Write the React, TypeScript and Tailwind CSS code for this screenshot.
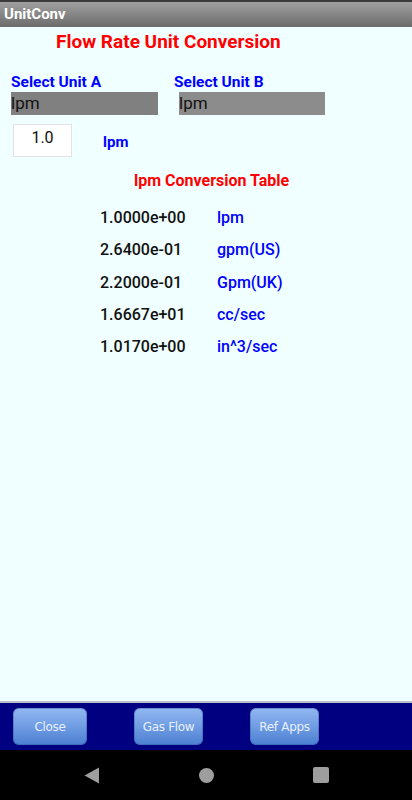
import React from "react";

const rows: [string, string][] = [
  ["1.0000e+00", "lpm"],
  ["2.6400e-01", "gpm(US)"],
  ["2.2000e-01", "Gpm(UK)"],
  ["1.6667e+01", "cc/sec"],
  ["1.0170e+00", "in^3/sec"],
];

function Btn({ label, w }: { label: string; w: string }) {
  return (
    <div
      className={`${w} h-[37px] rounded-[6px] flex items-center justify-center text-[12px] text-[#e8f0ff] bg-gradient-to-b from-[#93b8f2] to-[#4c80d2] shadow-[inset_0_0_0_1px_rgba(40,80,160,0.4)]`}
      style={{ fontFamily: '"DejaVu Sans", sans-serif', letterSpacing: "-0.3px" }}
    >
      {label}
    </div>
  );
}

export default function App() {
  return (
    <div
      className="w-[412px] h-[800px] flex flex-col bg-[#f0ffff] overflow-hidden"
      style={{ fontFamily: "Roboto, sans-serif" }}
    >
      <div className="h-[27px] shrink-0 bg-gradient-to-b from-[#a0a0a0] to-[#6c6c6c] border-t-2 border-[#3a3a3a] flex items-center pl-[4px]">
        <span className="text-white font-bold text-[15px] leading-none">UnitConv</span>
      </div>

      <div className="flex-1 flex flex-col">
        <div className="pl-[56px] pt-[4px] h-[25px] text-[19px] leading-[21px] font-bold text-[#ff0000] whitespace-nowrap">
          Flow Rate Unit Conversion
        </div>

        <div className="flex mt-[22px] pl-[11px]">
          <div className="w-[163px] text-[15.5px] leading-[17px] font-bold text-[#0000ff]">Select Unit A</div>
          <div className="text-[15.5px] leading-[17px] font-bold text-[#0000ff]">Select Unit B</div>
        </div>
        <div className="flex mt-[1px] pl-[11px]">
          <div className="w-[147px] h-[23px] bg-[#808080] flex items-center text-[17px] text-[#111]">lpm</div>
          <div className="ml-[21px] w-[146px] h-[23px] bg-[#8c8c8c] flex items-center text-[17px] text-[#111]">lpm</div>
        </div>

        <div className="flex items-center mt-[9px] pl-[13px]">
          <div className="w-[59px] h-[33px] bg-white border border-[#e2e2e2] flex items-center justify-center text-[16px] text-[#111] pb-[5px]">
            1.0
          </div>
          <div className="ml-[31px] text-[15px] font-bold text-[#0000ff] pt-[4px]">lpm</div>
        </div>

        <div className="pl-[134px] mt-[15px] text-[16px] leading-[18px] font-bold text-[#ff0000] whitespace-nowrap">
          lpm Conversion Table
        </div>

        <div className="flex flex-col mt-[12px]">
          {rows.map(([v, u]) => (
            <div key={u} className="flex h-[32.3px] items-center">
              <div className="w-[117px] pl-[100px] text-[16px] font-medium text-[#111] whitespace-nowrap">{v}</div>
              <div className="pl-[100px] text-[16px] font-medium text-[#0000ff] whitespace-nowrap">{u}</div>
            </div>
          ))}
        </div>
      </div>

      <div className="h-[2px] bg-[#b8c0c8] shrink-0" />
      <div className="h-[47px] shrink-0 bg-[#000080] flex items-center pl-[13px]">
        <Btn label="Close" w="w-[74px]" />
        <div className="ml-[47px]">
          <Btn label="Gas Flow" w="w-[69px]" />
        </div>
        <div className="ml-[47px]">
          <Btn label="Ref Apps" w="w-[69px]" />
        </div>
      </div>

      <div className="h-[50px] shrink-0 bg-black flex items-center">
        <div className="w-[84px]" />
        <svg width="16" height="17" viewBox="0 0 16 17">
          <path d="M15 0.5 L15 16.5 L0.5 8.5 Z" fill="#9e9e9e" />
        </svg>
        <div className="w-[99px]" />
        <div className="w-[15px] h-[15px] rounded-full bg-[#9e9e9e]" />
        <div className="w-[99px]" />
        <div className="w-[16px] h-[16px] rounded-[2px] bg-[#9e9e9e]" />
      </div>
    </div>
  );
}
